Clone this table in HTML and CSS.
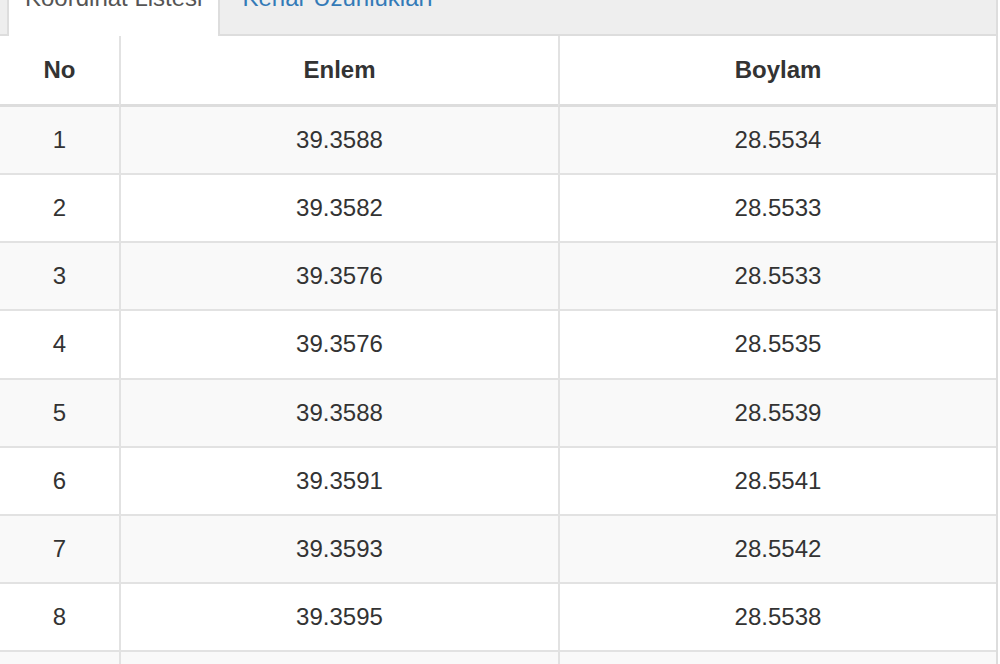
FILE: index.html
```html
<!DOCTYPE html>
<html lang="tr">
<head>
<meta charset="utf-8">
<title>Koordinat Listesi</title>
<link rel="stylesheet" href="styles.css">
</head>
<body>
<div class="panel">
  <ul class="tabs">
    <li class="tab active"><a href="#">Koordinat Listesi</a></li>
    <li class="tab"><a href="#">Kenar Uzunlukları</a></li>
  </ul>
  <table class="coords">
    <colgroup>
      <col class="c-no">
      <col class="c-lat">
      <col class="c-lon">
    </colgroup>
    <thead>
      <tr><th>No</th><th>Enlem</th><th>Boylam</th></tr>
    </thead>
    <tbody>
      <tr><td>1</td><td>39.3588</td><td>28.5534</td></tr>
      <tr><td>2</td><td>39.3582</td><td>28.5533</td></tr>
      <tr><td>3</td><td>39.3576</td><td>28.5533</td></tr>
      <tr><td>4</td><td>39.3576</td><td>28.5535</td></tr>
      <tr><td>5</td><td>39.3588</td><td>28.5539</td></tr>
      <tr><td>6</td><td>39.3591</td><td>28.5541</td></tr>
      <tr><td>7</td><td>39.3593</td><td>28.5542</td></tr>
      <tr><td>8</td><td>39.3595</td><td>28.5538</td></tr>
      <tr><td>9</td><td>39.3597</td><td>28.5536</td></tr>
    </tbody>
  </table>
</div>
</body>
</html>
```

FILE: styles.css
```css
html, body {
  margin: 0;
  padding: 0;
  background: #fff;
  overflow: hidden;
}

body {
  font-family: "Liberation Sans", Arial, sans-serif;
  font-size: 24px;
  color: #333;
}

.panel {
  width: 1000px;
  margin-left: -2px;
  border-left: 2px solid #ddd;
  border-right: 2px solid #ddd;
  box-sizing: border-box;
}

.tabs {
  list-style: none;
  margin: -38px 0 0 0;
  padding: 0 0 0 7px;
  display: flex;
  align-items: flex-end;
  background: #eee;
  border-bottom: 2px solid #ddd;
}

.tab {
  margin: 0 4px -2px 0;
  border: 2px solid transparent;
  border-bottom: none;
}

.tab a {
  display: block;
  padding: 17px 16px 21px;
  line-height: 34px;
  text-decoration: none;
  color: #337ab7;
}

.tab.active {
  background: #fff;
  border-color: #ddd;
}

.tab.active a {
  color: #555;
}

.coords {
  width: 996px;
  table-layout: fixed;
  border-collapse: separate;
  border-spacing: 0;
}

.c-no { width: 119px; }
.c-lat { width: 439px; }
.c-lon { width: 438px; }

.coords th,
.coords td {
  text-align: center;
  padding: 0;
  border-left: 2px solid #e2e2e2;
  border-bottom: 2px solid #e2e2e2;
  line-height: 30px;
}

.coords th:first-child,
.coords td:first-child {
  border-left: none;
}

.coords th {
  height: 68px;
  font-weight: bold;
  border-bottom: 3px solid #ddd;
}

.coords td {
  height: 66.15px;
}

.coords tbody tr:nth-child(odd) td {
  background: #f9f9f9;
}
```
